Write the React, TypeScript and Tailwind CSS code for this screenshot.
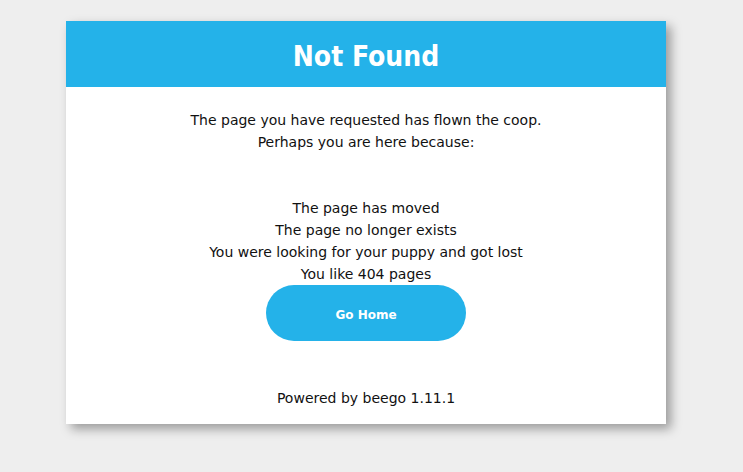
export default function App() {
  return (
    <div className="min-h-[472px] bg-[#eeeeee] pt-[21px]" style={{ fontFamily: '"DejaVu Sans", Verdana, sans-serif' }}>
      <div className="ml-[66px] w-[600px] bg-white text-center shadow-[5px_5px_10px_0px_rgba(0,0,0,0.35)]">
        <div className="flex h-[66px] items-center justify-center bg-[#24b2e9] pt-[5px]">
          <h1 className="text-[28px] font-bold text-white" style={{ fontFamily: '"DejaVu Sans Condensed", "DejaVu Sans", sans-serif' }}>
            Not Found
          </h1>
        </div>
        <div className="pt-[22px] text-[14px] leading-[22px] text-[#111]">
          <p>The page you have requested has flown the coop.</p>
          <p>Perhaps you are here because:</p>
          <div className="mt-[44px]">
            <p>The page has moved</p>
            <p>The page no longer exists</p>
            <p>You were looking for your puppy and got lost</p>
            <p>You like 404 pages</p>
          </div>
          <a
            href="/"
            className="inline-flex h-[56px] w-[200px] items-center justify-center rounded-full bg-[#24b2e9] pt-[3px] text-[12px] font-bold text-white"
          >
            Go Home
          </a>
          <p className="pt-[46px] pb-[15px]">Powered by beego 1.11.1</p>
        </div>
      </div>
    </div>
  );
}
